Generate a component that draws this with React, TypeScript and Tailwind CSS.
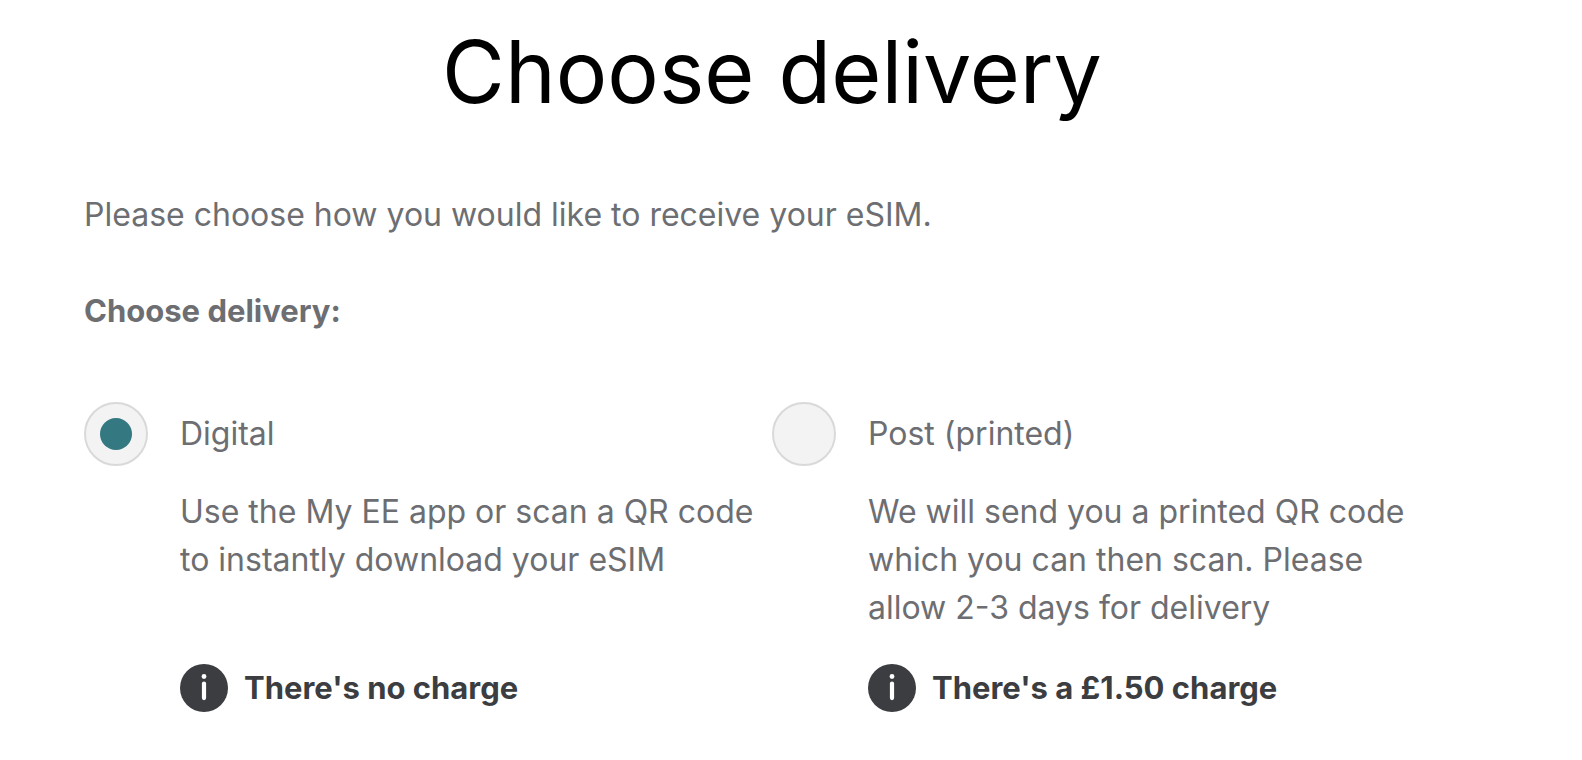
import { useState } from "react";

const options = [
  {
    id: "digital",
    label: "Digital",
    lines: ["Use the My EE app or scan a QR code", "to instantly download your eSIM"],
    charge: "There's no charge",
  },
  {
    id: "post",
    label: "Post (printed)",
    lines: ["We will send you a printed QR code", "which you can then scan. Please", "allow 2-3 days for delivery"],
    charge: "There's a £1.50 charge",
  },
];

function InfoIcon() {
  return (
    <svg className="size-12 shrink-0" viewBox="0 0 48 48" aria-hidden="true">
      <circle cx="24" cy="24" r="24" fill="#3c3d41" />
      <circle cx="24" cy="12.5" r="2.4" fill="#fff" />
      <rect x="21.9" y="17.5" width="4.2" height="18.7" rx="2.1" fill="#fff" />
    </svg>
  );
}

export default function App() {
  const [selected, setSelected] = useState("digital");
  return (
    <main className="bg-white pt-6 pr-[122px] pb-12 pl-21 font-['Inter',sans-serif] text-[32px] leading-12 text-[#6d6e72]">
      <h1 className="text-center text-[86px] leading-24 text-black">Choose delivery</h1>
      <p className="mt-[71px]">Please choose how you would like to receive your eSIM.</p>
      <fieldset className="mt-12">
        <legend className="text-[31px] font-bold">Choose delivery:</legend>
        <div className="mt-[67px] grid grid-cols-2">
          {options.map((o) => (
            <div key={o.id} className="flex flex-col">
              <label htmlFor={o.id} className="flex items-center gap-8">
                <input
                  id={o.id}
                  type="radio"
                  name="delivery"
                  checked={selected === o.id}
                  onChange={() => setSelected(o.id)}
                  aria-describedby={`${o.id}-details`}
                  className="grid size-16 shrink-0 appearance-none place-items-center rounded-full border-2 border-[#d9d9d9] bg-[#f3f3f3] before:size-8 before:rounded-full checked:before:bg-[#347982]"
                />
                {o.label}
              </label>
              <p id={`${o.id}-details`} className="mt-[22px] ml-24 grow whitespace-nowrap">
                {o.lines.map((line) => (
                  <span key={line} className="block">{line}</span>
                ))}
              </p>
              <div className="mt-8 ml-24 flex items-center gap-4 text-[31px] font-bold text-[#3c3d41]">
                <InfoIcon />
                {o.charge}
              </div>
            </div>
          ))}
        </div>
      </fieldset>
    </main>
  );
}
